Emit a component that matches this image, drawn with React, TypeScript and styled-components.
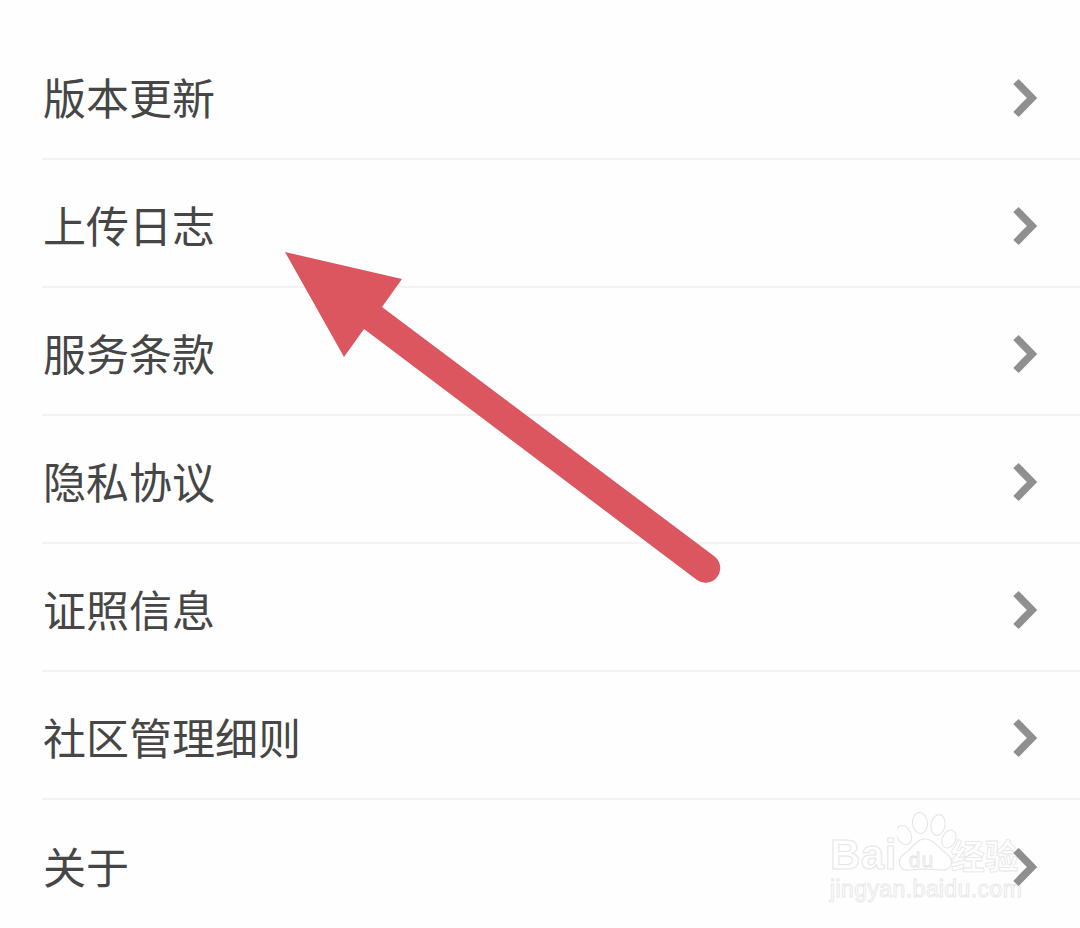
import React from "react";
import styled, { createGlobalStyle } from "styled-components";

const Global = createGlobalStyle`
  html, body { margin: 0; padding: 0; background: #fff; }
  body { width: 1080px; height: 928px; overflow: hidden; }
`;

const Page = styled.main`
  position: relative;
  width: 1080px;
  height: 928px;
  background: #fefefe;
  overflow: hidden;
  font-family: "Noto Sans CJK SC", "Noto Sans", sans-serif;
`;

const List = styled.ul`
  position: relative;
  z-index: 1;
  list-style: none;
  margin: 0;
  padding: 32px 0 0 42px;
`;

const Row = styled.li`
  box-sizing: border-box;
  height: 128px;
  display: flex;
  align-items: center;
  justify-content: space-between;
  padding: 3px 43px 0 1px;
  border-bottom: 2px solid #f3f3f3;
  &:last-child { border-bottom: none; }
`;

const Label = styled.span`
  font-size: 43px;
  line-height: 1;
  font-weight: 400;
  color: #464646;
`;

const Chevron = styled.svg`
  width: 26px;
  height: 44px;
  flex: none;
`;

const ArrowOverlay = styled.svg`
  position: absolute;
  z-index: 2;
  left: 0;
  top: 0;
  width: 1080px;
  height: 928px;
  pointer-events: none;
`;

const Watermark = styled.div`
  position: absolute;
  left: 830px;
  top: 812px;
  width: 200px;
  display: flex;
  flex-direction: column;
  gap: 6px;
  pointer-events: none;
`;

const LogoLine = styled.div`
  height: 60px;
  display: flex;
  align-items: flex-end;
`;

const Latin = styled.span`
  font-family: "Liberation Sans", sans-serif;
  font-size: 42px;
  line-height: 34px;
  font-weight: 700;
  letter-spacing: 0.5px;
  color: #ffffff;
  -webkit-text-stroke: 1px #e6e6e6;
`;

const PawMark = styled.div`
  position: relative;
  flex: none;
  width: 60px;
  height: 60px;
  margin-right: -6px;
`;

const PawDrawing = styled.svg`
  display: block;
  width: 60px;
  height: 60px;
`;

const PawLabel = styled.span`
  position: absolute;
  left: 12px;
  bottom: 2px;
  font-family: "Liberation Sans", sans-serif;
  font-size: 21px;
  line-height: 21px;
  font-weight: 400;
  letter-spacing: 1px;
  color: #ffffff;
  -webkit-text-stroke: 0.8px #e2e2e2;
`;

const Hanzi = styled.span`
  font-size: 34px;
  line-height: 34px;
  font-weight: 700;
  white-space: nowrap;
  color: #ffffff;
  -webkit-text-stroke: 0.8px #e6e6e6;
`;

const Domain = styled.span`
  font-family: "Liberation Sans", sans-serif;
  font-size: 23px;
  line-height: 23px;
  letter-spacing: 0.4px;
  white-space: nowrap;
  color: #ffffff;
  -webkit-text-stroke: 0.9px #e8e8e8;
`;

const items = ["版本更新", "上传日志", "服务条款", "隐私协议", "证照信息", "社区管理细则", "关于"];

export default function App() {
  return (
    <Page>
      <Global />
      <Watermark>
        <LogoLine>
          <Latin>Bai</Latin>
          <PawMark>
            <PawDrawing viewBox="0 0 60 60">
              <g fill="#fff" stroke="#e6e6e6" strokeWidth="1.1">
                <ellipse cx="7" cy="23" rx="7" ry="10" transform="rotate(-25 7 23)" />
                <ellipse cx="23" cy="11" rx="7.5" ry="10.5" transform="rotate(-6 23 11)" />
                <ellipse cx="41" cy="13" rx="7" ry="10.5" transform="rotate(10 41 13)" />
                <ellipse cx="52" cy="27" rx="6.5" ry="9.5" transform="rotate(25 52 27)" />
                <path d="M28 27 C37 27 41 36 50 42 C58 48 55 59 44 58 C35 57 21 57 12 58 C2 59 -1 48 7 42 C16 36 19 27 28 27 Z" />
              </g>
            </PawDrawing>
            <PawLabel>du</PawLabel>
          </PawMark>
          <Hanzi>经验</Hanzi>
        </LogoLine>
        <Domain>jingyan.baidu.com</Domain>
      </Watermark>
      <List>
        {items.map((t) => (
          <Row key={t}>
            <Label>{t}</Label>
            <Chevron viewBox="0 0 26 44">
              <path d="M5 6.5 L21 23 L5 39.5" fill="none" stroke="#8f8f8f" strokeWidth="7.5" />
            </Chevron>
          </Row>
        ))}
      </List>
      <ArrowOverlay viewBox="0 0 1080 928">
        <path
          d="M285 252 L402 279 L382 307 L714 556 A14 14 0 0 1 697 580 L364 329 L344 357 Z"
          fill="#dc565f"
        />
      </ArrowOverlay>
    </Page>
  );
}
